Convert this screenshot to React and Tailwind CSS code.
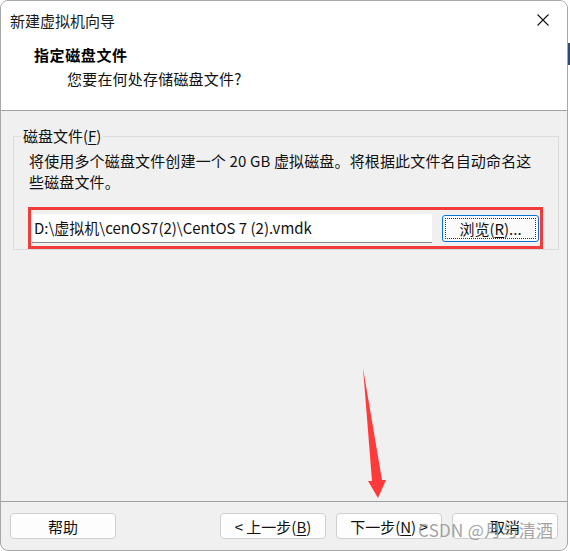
import React from "react";

function Btn({ children, className = "" }) {
  return (
    <div
      className={
        "h-[26px] w-[106px] rounded-[4px] border border-[#d0d0d0] bg-[#fdfdfd] flex items-center justify-center text-[15px] leading-none text-[#111] " +
        className
      }
    >
      {children}
    </div>
  );
}

export default function App() {
  return (
    <div className="relative w-[570px] h-[551px] bg-white overflow-hidden font-['Noto_Sans_CJK_SC','Noto_Sans',sans-serif]">
      <div className="absolute right-0 top-[43px] w-[2px] h-[22px] bg-[#2b4a7a]" />
      <div className="w-[568px] h-[551px] rounded-[8px] border border-[#a8a8a8] overflow-hidden flex flex-col bg-[#f0f0f0]">
        {/* title + header */}
        <div className="bg-white border-b border-[#a0a0a0] h-[110px] flex flex-col">
          <div className="h-[38px] flex items-center justify-between pl-[9px] pr-[18px]">
            <span className="text-[15px] leading-none text-[#1a1a1a]">新建虚拟机向导</span>
            <svg width="12" height="12" viewBox="0 0 12 12" className="mt-[-1px]">
              <path d="M0.5 0.5 L11.5 11.5 M11.5 0.5 L0.5 11.5" stroke="#111" strokeWidth="1.1" fill="none" />
            </svg>
          </div>
          <div className="pl-[33px] pt-[6px] text-[15px] leading-[20px] font-bold text-black tracking-[0.6px]">指定磁盘文件</div>
          <div className="pl-[66px] pt-[4px] text-[15px] leading-[20px] text-[#111] tracking-[0.2px]">您要在何处存储磁盘文件?</div>
        </div>

        {/* body */}
        <div className="flex-1 px-[12px] pt-[16px]">
          <fieldset className="h-[123px] border border-[#dcdcdc] px-[15px]">
            <legend className="ml-[-8px] px-[2px] text-[15px] leading-[18px] text-[#111]">
              磁盘文件(<span className="underline underline-offset-2">F</span>)
            </legend>
            <div className="mt-[5px] text-[15px] leading-[21px] text-[#111] pr-[4px] tracking-[0.15px]">
              将使用多个磁盘文件创建一个 20 GB 虚拟磁盘。将根据此文件名自动命名这些磁盘文件。
            </div>
            <div className="mt-[15px] ml-[-1px] w-[515px] h-[42px] border-[3px] border-[#f23c3c] flex items-center pl-[1px] gap-[10px]">
              <div className="w-[400px] h-[29px] bg-white border-b border-[#8a8a8a] flex items-center pl-[2px] text-[15px] leading-none text-[#111]">
                D:\虚拟机\cenOS7(2)\CentOS 7 (2).vmdk
              </div>
              <div className="w-[97px] h-[27px] rounded-[3px] border border-[#0a74d4] bg-[#fbfbfb] p-[2px]">
                <div className="w-full h-full border border-dotted border-[#333] flex items-center justify-center text-[15px] leading-none text-[#111]">
                  浏览(<span className="underline underline-offset-2">R</span>)...
                </div>
              </div>
            </div>
          </fieldset>
        </div>

        {/* footer */}
        <div className="h-[49px] border-t border-[#a0a0a0] flex items-start pt-[11px] pl-[9px]">
          <Btn className="w-[106px]">帮助</Btn>
          <Btn className="ml-[104px]">
            &lt; 上一步(<span className="underline underline-offset-2">B</span>)
          </Btn>
          <Btn className="ml-[10px]">
            下一步(<span className="underline underline-offset-2">N</span>) &gt;
          </Btn>
          <Btn className="ml-[10px]">取消</Btn>
        </div>
      </div>

      {/* annotation arrow */}
      <svg className="absolute left-0 top-0 pointer-events-none" width="570" height="551" viewBox="0 0 570 551">
        <polygon points="363,368 372,481 368,481 378,498 386,480 382,480" fill="#ff3a3a" />
      </svg>

      {/* watermark */}
      <div className="absolute left-[418px] top-[518px] text-[17px] leading-[24px] text-[#8f8f8f] opacity-80 tracking-[0.3px] pointer-events-none">
        CSDN @月与清酒
      </div>
    </div>
  );
}
